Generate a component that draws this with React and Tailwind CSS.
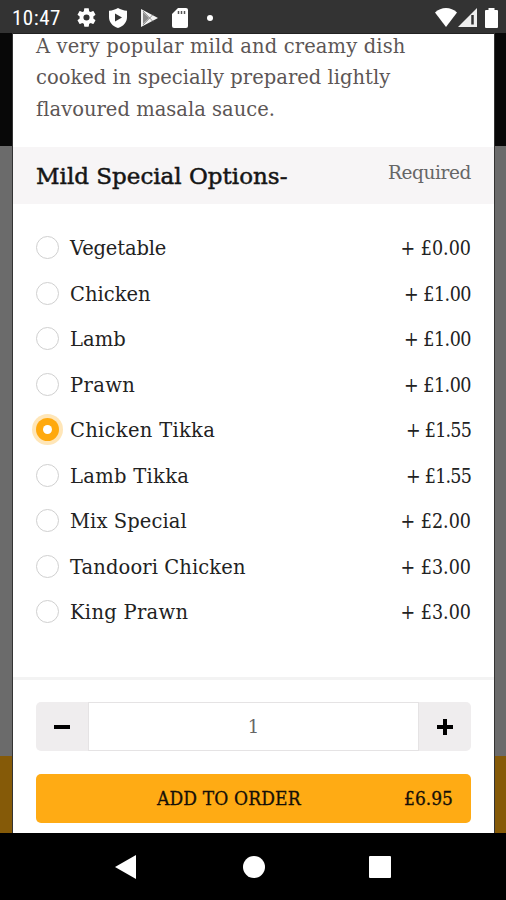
import React, { useState } from 'react';

const options = [
  { name: 'Vegetable', price: '0.00', tracking: 'tracking-[-0.15px]', priceTracking: 'tracking-normal' },
  { name: 'Chicken', price: '1.00', tracking: 'tracking-normal', priceTracking: 'tracking-[-0.5px]' },
  { name: 'Lamb', price: '1.00', tracking: 'tracking-[0.1px]', priceTracking: 'tracking-[-0.5px]' },
  { name: 'Prawn', price: '1.00', tracking: 'tracking-[0.4px]', priceTracking: 'tracking-[-0.5px]' },
  { name: 'Chicken Tikka', price: '1.55', tracking: 'tracking-[0.3px]', priceTracking: 'tracking-[-0.8px]' },
  { name: 'Lamb Tikka', price: '1.55', tracking: 'tracking-[0.3px]', priceTracking: 'tracking-[-0.8px]' },
  { name: 'Mix Special', price: '2.00', tracking: 'tracking-[0.1px]', priceTracking: 'tracking-normal' },
  { name: 'Tandoori Chicken', price: '3.00', tracking: 'tracking-[0.1px]', priceTracking: 'tracking-normal' },
  { name: 'King Prawn', price: '3.00', tracking: 'tracking-[0.3px]', priceTracking: 'tracking-normal' },
];

const StatusBar = () => (
  <div className="flex h-[33px] shrink-0 items-center bg-[#333333] pt-[2px] pl-[12px] pr-[8px] text-white">
    <span className="w-[50px] whitespace-nowrap font-[Roboto] text-[21px] leading-[30px] tracking-[0.5px] [font-stretch:condensed]">10:47</span>
    {/* settings */}
    <svg className="ml-[13px]" width="23" height="23" viewBox="0 0 24 24" fill="currentColor">
      <path d="M19.14 12.94c.04-.3.06-.61.06-.94 0-.32-.02-.64-.07-.94l2.03-1.58c.18-.14.23-.41.12-.61l-1.92-3.32c-.12-.22-.37-.29-.59-.22l-2.39.96c-.5-.38-1.03-.7-1.62-.94l-.36-2.54c-.04-.24-.24-.41-.48-.41h-3.84c-.24 0-.43.17-.47.41l-.36 2.54c-.59.24-1.13.57-1.62.94l-2.39-.96c-.22-.08-.47 0-.59.22L2.74 8.87c-.12.21-.08.47.12.61l2.03 1.58c-.05.3-.09.63-.09.94s.02.64.07.94l-2.03 1.58c-.18.14-.23.41-.12.61l1.92 3.32c.12.22.37.29.59.22l2.39-.96c.5.38 1.03.7 1.62.94l.36 2.54c.05.24.24.41.48.41h3.84c.24 0 .44-.17.47-.41l.36-2.54c.59-.24 1.13-.56 1.62-.94l2.39.96c.22.08.47 0 .59-.22l1.92-3.32c.12-.22.07-.47-.12-.61l-2.01-1.58zM12 15.2a3.2 3.2 0 1 1 0-6.4 3.2 3.2 0 0 1 0 6.4z" />
    </svg>
    {/* play protect */}
    <svg className="ml-[11px]" width="18" height="20" viewBox="0 0 18 20">
      <path d="M9 0C6.5 1.6 3.5 2.5 0 2.7V9c0 5.2 3.5 9.3 9 11 5.5-1.7 9-5.8 9-11V2.7C14.5 2.5 11.5 1.6 9 0z" fill="white" />
      <path d="M6 5.5v8l7-4z" fill="#333333" />
    </svg>
    {/* play store */}
    <svg className="ml-[14px]" width="17" height="20" viewBox="0 0 17 20">
      <path d="M0 1l17 9L0 19z" fill="#f2f2f2" />
      <path d="M2 4v12l6-6z" fill="#8a8a8a" />
      <path d="M2 3l10 10.5M2 17L12 6.5" fill="none" stroke="#777777" strokeWidth="0.8" />
    </svg>
    {/* sd card */}
    <svg className="ml-[14px]" width="16" height="20" viewBox="0 0 16 20">
      <path d="M6 0h8a2 2 0 0 1 2 2v16a2 2 0 0 1-2 2H2a2 2 0 0 1-2-2V6z" fill="white" />
      <path d="M6.5 3v3M9.5 3v3M12.5 3v3" stroke="#555555" strokeWidth="1.5" />
    </svg>
    <span className="ml-[19px] size-[6px] rounded-full bg-white" />
    <div className="ml-auto flex items-center">
      <svg width="22" height="19" viewBox="0 0 22 19">
        <path d="M0 4.5C6-1.5 16-1.5 22 4.5L11 19z" fill="white" />
      </svg>
      <svg className="ml-[1px]" width="19" height="19" viewBox="0 0 19 19">
        <path d="M19 0v19H0z" fill="#eeeeee" />
        <path d="M14.5 7v9.5" stroke="#333333" strokeWidth="2.5" />
      </svg>
      <svg className="ml-[8px]" width="13" height="20" viewBox="0 0 13 20">
        <path d="M3.5 2V0h6v2H12a1 1 0 0 1 1 1v16a1 1 0 0 1-1 1H1a1 1 0 0 1-1-1V3a1 1 0 0 1 1-1z" fill="white" />
      </svg>
    </div>
  </div>
);

// page behind the dialog, dimmed by the overlay
const Backdrop = ({ className }) => (
  <div className={`flex shrink-0 flex-col ${className}`}>
    <div className="h-[113px] bg-[#080808]" />
    <div className="h-[610px] bg-[#6b6b6b]" />
    <div className="flex-1 bg-[#855a08]" />
  </div>
);

const Radio = ({ checked }) =>
  checked ? (
    <span className="flex size-[23px] shrink-0 items-center justify-center rounded-full bg-[#ffa90d] ring-4 ring-[#ffe6b8]">
      <span className="size-[9px] rounded-full bg-white" />
    </span>
  ) : (
    <span className="size-[23px] shrink-0 rounded-full border-[1.5px] border-[#d0d0d0] bg-white" />
  );

const NavBar = () => (
  <div className="flex h-[67px] shrink-0 items-center bg-black pl-[115px]">
    <svg width="21" height="24" viewBox="0 0 21 24">
      <path d="M21 0v24L0 12z" fill="white" />
    </svg>
    <span className="ml-[107px] size-[22px] rounded-full bg-white" />
    <span className="ml-[104px] size-[22px] rounded-[1px] bg-white" />
  </div>
);

export default function App() {
  const [selected, setSelected] = useState('Chicken Tikka');
  const [quantity, setQuantity] = useState(1);

  return (
    <div className="flex h-[900px] w-[506px] flex-col overflow-hidden bg-black font-['DejaVu_Serif',serif]">
      <StatusBar />
      <div className="flex h-[800px] shrink-0">
        <Backdrop className="w-[13px] border-r border-[#333333]" />

        <div className="flex w-[481px] shrink-0 flex-col overflow-hidden border-t border-[#222222] bg-white">
          <div className="h-[113px] shrink-0 whitespace-nowrap pl-[23px] text-[19.5px] leading-[31.4px] text-[#5c5655]">
            <p className="mt-[-3px] tracking-[0.13px]">A very popular mild and creamy dish</p>
            <p className="tracking-[0.02px]">cooked in specially prepared lightly</p>
            <p className="tracking-[0.02px]">flavoured masala sauce.</p>
          </div>

          <div className="flex h-[57px] shrink-0 items-center justify-between bg-[#f7f5f6] px-[23px]">
            <h2 className="pt-[2px] text-[23px] text-[#151515] [-webkit-text-stroke:0.5px_#151515]">Mild Special Options-</h2>
            <span className="mb-[5px] text-[18.5px] tracking-[-0.4px] text-[#666666]">Required</span>
          </div>

          <div className="flex flex-col pt-[21px] pl-[23px] pr-[23px]">
            {options.map((option) => (
              <label key={option.name} className="flex h-[45.5px] items-center text-[19.5px] text-[#222222]">
                <input
                  type="radio"
                  name="option"
                  className="sr-only"
                  checked={selected === option.name}
                  onChange={() => setSelected(option.name)}
                />
                <Radio checked={selected === option.name} />
                <span className={`ml-[11px] whitespace-nowrap pt-[2px] ${option.tracking}`}>{option.name}</span>
                <span className={`ml-auto whitespace-nowrap pt-[2px] font-['DejaVu_Serif_Condensed','DejaVu_Serif',serif] [font-stretch:condensed] ${option.priceTracking}`}>
                  + £{option.price}
                </span>
              </label>
            ))}
          </div>

          <div className="mt-auto flex h-[156px] shrink-0 flex-col border-t-[3px] border-[#f3f3f3] px-[23px] pt-[22px]">
            <div className="flex h-[49px] shrink-0 overflow-hidden rounded-[5px] bg-[#efedee]">
              <button className="flex w-[52px] items-center justify-center" onClick={() => setQuantity(Math.max(1, quantity - 1))}>
                <span className="h-[4px] w-[16px] bg-black" />
              </button>
              <div className="flex flex-1 items-center justify-center border-[1.5px] border-[#e5e3e4] bg-white text-[18px] text-[#666666]">
                {quantity}
              </div>
              <button className="flex w-[52px] items-center justify-center" onClick={() => setQuantity(quantity + 1)}>
                <svg width="16" height="16" viewBox="0 0 16 16">
                  <path d="M8 0v16M0 8h16" stroke="black" strokeWidth="4" />
                </svg>
              </button>
            </div>
            <button className="mt-[23px] flex h-[49px] shrink-0 items-center rounded-[5px] bg-[#ffab14] pr-[18px] pl-[121px] font-['DejaVu_Serif_Condensed','DejaVu_Serif',serif] text-[19px] text-[#151008] [-webkit-text-stroke:0.3px_#151008] [font-stretch:condensed]">
              <span className="whitespace-nowrap tracking-[0.15px]">ADD TO ORDER</span>
              <span className="ml-auto">£6.95</span>
            </button>
          </div>
        </div>

        <Backdrop className="w-[12px] border-l border-[#333333]" />
      </div>
      <NavBar />
    </div>
  );
}
